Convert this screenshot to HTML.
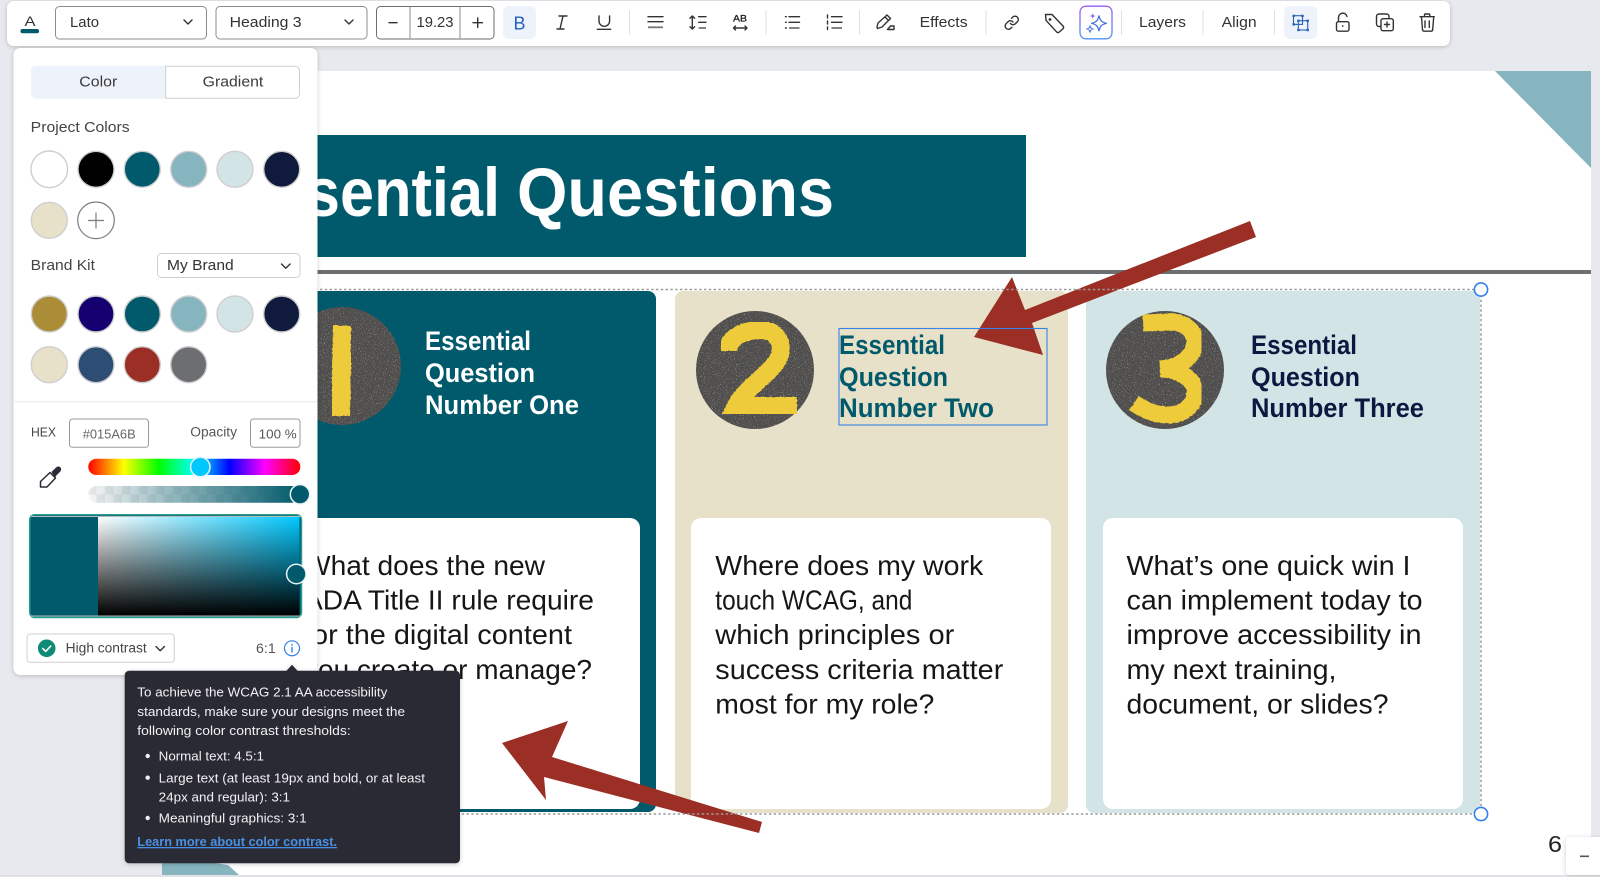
<!DOCTYPE html>
<html lang="en">
<head>
<meta charset="utf-8">
<title>Essential Questions editor</title>
<style>
html,body{margin:0;padding:0;width:1600px;height:877px;overflow:hidden;background:#e8e9ee}
svg{display:block;font-family:"Liberation Sans",sans-serif}
.ui{fill:#333}
.ic{fill:none;stroke:#333;stroke-width:1.4;stroke-linecap:round;stroke-linejoin:round}
.gl{fill:none;stroke:#777;stroke-width:1.8}
.dv{stroke:#dfe0e4;stroke-width:1}
.sw{stroke:#cfcfcf;stroke-width:1.4}
.hd{font-weight:bold;font-size:26.5px}
.bd{font-size:27.5px;fill:#161616}
.tt{font-size:13px;fill:#f1f1f3}
.dash{fill:none;stroke:#9a9a9a;stroke-width:1.5;stroke-dasharray:2.4 2.4}
</style>
</head>
<body>
<svg width="1600" height="877" viewBox="0 0 1600 877" xmlns="http://www.w3.org/2000/svg">
<defs>
<filter id="as" x="0" y="0" width="100%" height="100%" color-interpolation-filters="sRGB">
<feTurbulence type="fractalNoise" baseFrequency=".9" numOctaves="2" seed="4"/>
<feColorMatrix type="matrix" values="0 0 0 0 .62 0 0 0 0 .62 0 0 0 0 .62 5 0 0 0 -3"/>
<feComposite in2="SourceGraphic" operator="in"/>
<feBlend in2="SourceGraphic" mode="normal"/>
</filter>
<filter id="ro" x="-10%" y="-10%" width="120%" height="120%" color-interpolation-filters="sRGB">
<feTurbulence type="fractalNoise" baseFrequency=".4" numOctaves="2" seed="8" result="n"/>
<feDisplacementMap in="SourceGraphic" in2="n" scale="2" xChannelSelector="R" yChannelSelector="G"/>
</filter>
<filter id="sh" x="-10%" y="-10%" width="120%" height="120%"><feDropShadow dx="0" dy="1" stdDeviation="2.5" flood-color="#000" flood-opacity=".2"/></filter>
<linearGradient id="hue"><stop offset="0" stop-color="#f00"/><stop offset=".1667" stop-color="#ff0"/><stop offset=".3333" stop-color="#0f0"/><stop offset=".5" stop-color="#0ff"/><stop offset=".6667" stop-color="#00f"/><stop offset=".8333" stop-color="#f0f"/><stop offset="1" stop-color="#f00"/></linearGradient>
<linearGradient id="alp"><stop offset="0" stop-color="#015a6b" stop-opacity="0"/><stop offset="1" stop-color="#015a6b"/></linearGradient>
<linearGradient id="wc"><stop offset="0" stop-color="#fff"/><stop offset="1" stop-color="#00c8ff"/></linearGradient>
<linearGradient id="bk" x1="0" y1="0" x2="0" y2="1"><stop offset="0" stop-color="#000" stop-opacity="0"/><stop offset="1" stop-color="#000"/></linearGradient>
<linearGradient id="ai" x1="0" y1="0" x2="0" y2="1"><stop offset="0" stop-color="#9b5cf5"/><stop offset="1" stop-color="#4f94f5"/></linearGradient>
<pattern id="chk" x="88" y="486" width="17" height="17" patternUnits="userSpaceOnUse"><rect width="17" height="17" fill="#f6f6f6"/><rect width="8.5" height="8.5" fill="#e8e8e8"/><rect x="8.5" y="8.5" width="8.5" height="8.5" fill="#e8e8e8"/></pattern>
</defs>

<rect width="1600" height="877" fill="#e8e9ee"/>

<!-- slide -->
<rect x="162" y="71" width="1429" height="804" fill="#fff"/>
<polygon points="1495,71 1591,71 1591,168" fill="#87b5bf"/>
<polygon points="162,855 228,865 239,875 162,875" fill="#87b5bf"/>
<rect x="200" y="135" width="826" height="122" fill="#015a6b"/>
<text x="231" y="216" font-size="69" font-weight="bold" fill="#fff" textLength="269" lengthAdjust="spacingAndGlyphs">Essential</text>
<text x="517" y="216" font-size="69" font-weight="bold" fill="#fff" textLength="317" lengthAdjust="spacingAndGlyphs">Questions</text>
<rect x="200" y="270" width="1391" height="4" fill="#6d6e71"/>

<!-- cards -->
<rect x="264" y="291" width="392" height="521" rx="8" fill="#015a6b"/>
<rect x="675" y="291" width="393" height="522" rx="8" fill="#e8e1c9"/>
<rect x="1086" y="291" width="394" height="522" rx="8" fill="#d3e4e7"/>
<rect x="280" y="518" width="360" height="291" rx="10" fill="#fff"/>
<rect x="691" y="518" width="360" height="291" rx="10" fill="#fff"/>
<rect x="1103" y="518" width="360" height="291" rx="10" fill="#fff"/>

<!-- number circles -->
<circle cx="342" cy="366" r="59" fill="#4f4e4d" filter="url(#as)"/>
<polygon points="333,325 351,326 351,370 350,416 332,416 332,370" fill="#eecb3b" filter="url(#ro)"/>
<circle cx="755" cy="370" r="59" fill="#4f4e4d" filter="url(#as)"/>
<path d="M728 351C728 335 748 330 761 330C776 330 783 342 780 354C777 370 746 386 736 406L797 406" fill="none" stroke="#eecb3b" stroke-width="18" filter="url(#ro)"/>
<circle cx="1165" cy="370" r="59" fill="#4f4e4d" filter="url(#as)"/>
<path d="M1143 323L1170 322C1186 322 1195 332 1195 342C1195 356 1180 368 1160 369C1180 369 1195 380 1195 392C1195 406 1182 415 1168 415C1155 415 1144 410 1134 403" fill="none" stroke="#eecb3b" stroke-width="17" filter="url(#ro)"/>

<!-- headings -->
<g class="hd" fill="#fff">
<text x="425" y="350" textLength="106" lengthAdjust="spacingAndGlyphs">Essential</text>
<text x="425" y="382" textLength="110" lengthAdjust="spacingAndGlyphs">Question</text>
<text x="425" y="414" textLength="154" lengthAdjust="spacingAndGlyphs">Number One</text>
</g>
<g class="hd" fill="#015a6b">
<text x="839" y="354" textLength="106" lengthAdjust="spacingAndGlyphs">Essential</text>
<text x="839" y="386" textLength="109" lengthAdjust="spacingAndGlyphs">Question</text>
<text x="839" y="417" textLength="155" lengthAdjust="spacingAndGlyphs">Number Two</text>
</g>
<g class="hd" fill="#0e1740">
<text x="1251" y="354" textLength="106" lengthAdjust="spacingAndGlyphs">Essential</text>
<text x="1251" y="386" textLength="109" lengthAdjust="spacingAndGlyphs">Question</text>
<text x="1251" y="417" textLength="173" lengthAdjust="spacingAndGlyphs">Number Three</text>
</g>

<!-- body text -->
<g class="bd">
<text x="304" y="575" textLength="241" lengthAdjust="spacingAndGlyphs">What does the new</text>
<text x="304" y="609.500" textLength="290" lengthAdjust="spacingAndGlyphs">ADA Title II rule require</text>
<text x="304" y="644.200" textLength="268" lengthAdjust="spacingAndGlyphs">for the digital content</text>
<text x="304" y="679" textLength="288" lengthAdjust="spacingAndGlyphs">you create or manage?</text>
<text x="715.300" y="575" textLength="268" lengthAdjust="spacingAndGlyphs">Where does my work</text>
<text x="715.300" y="609.500" textLength="197" lengthAdjust="spacingAndGlyphs">touch WCAG, and</text>
<text x="715.300" y="644.200" textLength="239" lengthAdjust="spacingAndGlyphs">which principles or</text>
<text x="715.300" y="679" textLength="288" lengthAdjust="spacingAndGlyphs">success criteria matter</text>
<text x="715.300" y="713.500" textLength="219" lengthAdjust="spacingAndGlyphs">most for my role?</text>
<text x="1126.500" y="575" textLength="284" lengthAdjust="spacingAndGlyphs">What’s one quick win I</text>
<text x="1126.500" y="609.500" textLength="296" lengthAdjust="spacingAndGlyphs">can implement today to</text>
<text x="1126.500" y="644.200" textLength="295" lengthAdjust="spacingAndGlyphs">improve accessibility in</text>
<text x="1126.500" y="679" textLength="210" lengthAdjust="spacingAndGlyphs">my next training,</text>
<text x="1126.500" y="713.500" textLength="262" lengthAdjust="spacingAndGlyphs">document, or slides?</text>
</g>

<!-- arrows -->
<polygon points="974,337 1012,277 1025,310 1250,221 1256,237 1032,323 1043,355" fill="#9c2f25"/>
<polygon points="502,743 568,721 552,757 762,822 759,833 544,777 546,800" fill="#9c2f25"/>

<!-- selection -->
<rect x="200" y="289.500" width="1281" height="524.500" class="dash"/>
<rect x="839" y="328.500" width="208" height="96.500" fill="none" stroke="#3583e6" stroke-width="1.100"/>
<circle cx="1481" cy="289.500" r="6.600" fill="#fff" stroke="#2f80ed" stroke-width="1.600"/>
<circle cx="1481" cy="814" r="6.600" fill="#fff" stroke="#2f80ed" stroke-width="1.600"/>

<text x="1548" y="852" font-size="23" fill="#222" textLength="14" lengthAdjust="spacingAndGlyphs">6</text>
<rect x="1566" y="837" width="50" height="38" rx="4" fill="#fff" filter="url(#sh)"/>
<rect x="1580" y="855.500" width="9" height="1.600" fill="#555"/>
<rect x="0" y="875" width="1566" height="2" fill="#e0e1e6"/>

<!-- toolbar -->
<rect x="7" y="1" width="1443" height="45" rx="7" fill="#fff" filter="url(#sh)"/>
<text x="24.500" y="26" font-size="14" fill="#333" textLength="11" lengthAdjust="spacingAndGlyphs">A</text>
<rect x="20.500" y="29" width="18.500" height="4.300" rx="2" fill="#015a6b"/>

<rect x="55.500" y="6.500" width="151" height="32.500" rx="4" fill="#fff" stroke="#8d8d8d" stroke-width="1"/>
<text x="70" y="27" font-size="14.500" class="ui" textLength="29" lengthAdjust="spacingAndGlyphs">Lato</text>
<path d="M184 20l4 4 4-4" class="ic" stroke-width="1.200"/>
<rect x="216" y="6.500" width="151" height="32.500" rx="4" fill="#fff" stroke="#8d8d8d" stroke-width="1"/>
<text x="229.600" y="27" font-size="14.500" class="ui" textLength="72" lengthAdjust="spacingAndGlyphs">Heading 3</text>
<path d="M345 20l4 4 4-4" class="ic" stroke-width="1.200"/>
<rect x="376.500" y="6.500" width="117.500" height="32.500" rx="4" fill="#fff" stroke="#6e6e6e" stroke-width="1"/>
<path d="M410 6.500V39M460 6.500V39" stroke="#8d8d8d" stroke-width="1"/>
<path d="M389 22.700h8M473 22.700h9.500M477.700 18v9.500" class="ic" stroke-width="1.500"/>
<text x="416.500" y="27" font-size="14.500" class="ui" textLength="37" lengthAdjust="spacingAndGlyphs">19.23</text>

<rect x="503" y="6" width="33" height="33" rx="6" fill="#edf2fb"/>
<text x="513.500" y="29.500" font-size="18.500" fill="#1f62c0" textLength="12" lengthAdjust="spacingAndGlyphs">B</text>
<path d="M559 16h8M557 29h7M563 16l-3 13" class="ic"/>
<path d="M599 16v5a5.300 5.300 0 0 0 10.600 0v-5M597.300 29.300h13.400" class="ic"/>
<path class="dv" d="M629.500 10v25M766 10v25M859.500 10v25M986 10v25M1121.500 10v25M1203 10v25M1274.500 10v25"/>
<path d="M648 16.700h15M648 21.700h15" class="ic" stroke-linecap="butt"/><path d="M648 27.300h15" class="gl"/>
<path d="M692.300 16v13M690 18.300l2.300-2.300 2.300 2.300M690 26.700l2.300 2.300 2.300-2.300" class="ic"/>
<path d="M698.700 16.700h7.300M698.700 22.300h7.300" class="ic" stroke="#555"/><path d="M698.700 28h7.300" class="gl"/>
<text x="733" y="21.700" font-size="9.500" fill="#222" stroke="#222" stroke-width=".3" textLength="14" lengthAdjust="spacingAndGlyphs">AB</text>
<path d="M733.500 28h13.500M735.500 26l-2 2 2 2M745 26l2 2-2 2" class="ic" stroke-width="1.200"/>
<path d="M789 16.700h10.500M789 22.300h10.500" class="ic"/><path d="M789 28h10.500" class="gl"/>
<path d="M785.500 16.700h.8M785.500 22.300h.8M785.500 28h.8" class="ic"/>
<path d="M831.500 16.700h10.500M831.500 22.300h10.500" class="ic"/><path d="M831.500 28h10.500" class="gl"/>
<path d="M827.500 15v3M827.500 21v3M827.500 27v2.500" class="ic" stroke-width="1.100"/>
<path d="M877 27l1-4 9-8 3.500 3.500-8.500 8.500-4.500 1.500zM885 17l3.500 3.500" class="ic"/><path d="M887.500 29.500h6.500v-3.500h-3.500z" class="ic" stroke="#555"/>
<text x="919.600" y="27" font-size="14.500" class="ui" textLength="48" lengthAdjust="spacingAndGlyphs">Effects</text>
<g transform="translate(1003.800 14.800) scale(.66)" fill="none" stroke="#333" stroke-width="2.100" stroke-linecap="round" stroke-linejoin="round"><path d="M10 13a5 5 0 0 0 7.540.54l3-3a5 5 0 0 0-7.070-7.070l-1.720 1.710"/><path d="M14 11a5 5 0 0 0-7.540-.54l-3 3a5 5 0 0 0 7.070 7.070l1.710-1.710"/></g>
<path d="M1045.500 14.500h6.500l11 11.500c.8 .9 .8 2-.1 2.900l-3.600 3.100c-.9 .8-2 .7-2.800-.2l-10.500-11.500z" class="ic"/><circle cx="1050" cy="19.500" r="1.400" fill="#333"/>
<rect x="1080" y="6.200" width="32" height="32.600" rx="6" fill="#fff" stroke="url(#ai)" stroke-width="1.300"/>
<path d="M1099 15.500c1 5 2.800 6.800 7.800 7.800-5 1-6.800 2.800-7.800 7.800-1-5-2.800-6.800-7.800-7.800 5-1 6.800-2.800 7.800-7.800z" fill="none" stroke="#3e6fe6" stroke-width="1.200"/>
<path d="M1092.700 13c.5 2 .9 2.500 3 3-2.100 .5-2.500 1-3 3-.5-2-.9-2.500-3-3 2.100-.5 2.500-1 3-3z" fill="#9b6cf0"/>
<path d="M1090 25.500c.5 2.400 1.100 3 3.500 3.500-2.400 .5-3 1.100-3.500 3.500-.5-2.400-1.100-3-3.500-3.500 2.400-.5 3-1.100 3.500-3.500z" fill="none" stroke="#3e6fe6" stroke-width="1"/>
<text x="1139" y="27" font-size="14.500" class="ui" textLength="47" lengthAdjust="spacingAndGlyphs">Layers</text>
<text x="1221.600" y="27" font-size="14.500" class="ui" textLength="35" lengthAdjust="spacingAndGlyphs">Align</text>
<rect x="1284" y="6" width="33.300" height="33" rx="6" fill="#edf2fb"/>
<g fill="none" stroke="#2a62b8" stroke-width="1.100"><rect x="1293.500" y="15.700" width="9" height="8.700"/><rect x="1298.300" y="20.700" width="9.400" height="9.300"/></g>
<g fill="#2a62b8"><rect x="1292.500" y="14.700" width="2.400" height="2.400"/><rect x="1301.300" y="14.700" width="2.400" height="2.400"/><rect x="1292.500" y="23.200" width="2.400" height="2.400"/><rect x="1297.200" y="19.600" width="2.400" height="2.400"/><rect x="1306.500" y="19.600" width="2.400" height="2.400"/><rect x="1297.200" y="28.800" width="2.400" height="2.400"/><rect x="1306.500" y="28.800" width="2.400" height="2.400"/></g>
<rect x="1336.500" y="21.700" width="12.500" height="9.500" rx="1.800" class="ic"/>
<path d="M1338.500 21.500v-4a4.300 4.300 0 0 1 8.500-1" class="ic"/><circle cx="1342.700" cy="26" r=".9" fill="#333"/>
<rect x="1376.500" y="14" width="12.500" height="12.500" rx="2.500" class="ic"/>
<rect x="1381" y="18.700" width="12.300" height="12" rx="2" fill="#fff" stroke="#333" stroke-width="1.400"/>
<path d="M1387 22v5M1384.500 24.500h5" class="ic" stroke-width="1.200"/>
<path d="M1420 16.700h14.300M1424.500 16.500v-1.500c0-.8.5-1 1-1h3.300c.5 0 1 .2 1 1v1.500M1421.500 17l1 12.500c.1 1 .7 1.700 1.700 1.700h6.800c1 0 1.600-.7 1.700-1.700l1-12.500M1425 21v6.500M1429.300 21v6.500" class="ic" stroke="#444"/>

<!-- colour panel -->
<rect x="13.500" y="48" width="304" height="627" rx="7" fill="#fff" filter="url(#sh)"/>
<path d="M36 65.700h129.700v33H36a5 5 0 0 1-5-5v-23a5 5 0 0 1 5-5z" fill="#edf2fb"/>
<path d="M165.700 66.200h129.300a4.500 4.500 0 0 1 4.500 4.500v23a4.500 4.500 0 0 1-4.500 4.500H165.700z" fill="#fff" stroke="#cfcfcf" stroke-width="1"/>
<text x="79.300" y="86.500" font-size="15" fill="#3a3a3a" textLength="38" lengthAdjust="spacingAndGlyphs">Color</text>
<text x="202.700" y="86.500" font-size="15" fill="#3a3a3a" textLength="60.600" lengthAdjust="spacingAndGlyphs">Gradient</text>
<text x="30.700" y="132" font-size="14.500" fill="#444" textLength="99" lengthAdjust="spacingAndGlyphs">Project Colors</text>

<circle cx="49.300" cy="169.300" r="18.300" fill="#fff" class="sw"/>
<circle cx="96" cy="169.300" r="18" fill="#000" class="sw"/>
<circle cx="142.300" cy="169.300" r="18" fill="#015a6b" class="sw"/>
<circle cx="188.700" cy="169.300" r="18" fill="#87b5bf" class="sw"/>
<circle cx="235" cy="169.300" r="18" fill="#d3e4e7" class="sw"/>
<circle cx="281.700" cy="169.300" r="18" fill="#0f1a3c" class="sw"/>
<circle cx="49.300" cy="220.300" r="18" fill="#e8e1c9" class="sw"/>
<circle cx="96" cy="220.300" r="18.300" fill="#fff" stroke="#7d7d7d" stroke-width="1.200"/>
<path d="M96 212.500v16M88 220.500h16" stroke="#7d7d7d" stroke-width="1.200"/>

<text x="30.700" y="270" font-size="14.500" fill="#444" textLength="64.300" lengthAdjust="spacingAndGlyphs">Brand Kit</text>
<rect x="157.500" y="253.500" width="142.500" height="24" rx="4" fill="#fff" stroke="#cfcfcf"/>
<text x="167" y="270" font-size="14.500" fill="#333" textLength="66.700" lengthAdjust="spacingAndGlyphs">My Brand</text>
<path d="M281.500 264l4.300 4.300 4.300-4.300" class="ic" stroke-width="1.200"/>

<circle cx="49.300" cy="314" r="18" fill="#ab8d37" class="sw"/>
<circle cx="96" cy="314" r="18" fill="#15006f" class="sw"/>
<circle cx="142.300" cy="314" r="18" fill="#015a6b" class="sw"/>
<circle cx="188.700" cy="314" r="18" fill="#87b5bf" class="sw"/>
<circle cx="235" cy="314" r="18" fill="#d3e4e7" class="sw"/>
<circle cx="281.700" cy="314" r="18" fill="#0f1a3c" class="sw"/>
<circle cx="49.300" cy="364.700" r="18" fill="#e8e1c9" class="sw"/>
<circle cx="96" cy="364.700" r="18" fill="#2e4d74" class="sw"/>
<circle cx="142.300" cy="364.700" r="18" fill="#9c2f25" class="sw"/>
<circle cx="188.700" cy="364.700" r="18" fill="#6d6e71" class="sw"/>

<path d="M14 401.700h303.500" stroke="#e8e8ea" stroke-width="1"/>
<text x="31" y="436.500" font-size="13" fill="#444" textLength="25" lengthAdjust="spacingAndGlyphs">HEX</text>
<rect x="69.500" y="419" width="79" height="28.300" rx="3" fill="#fff" stroke="#9a9a9a"/>
<text x="82.700" y="438.300" font-size="13" fill="#666" textLength="53" lengthAdjust="spacingAndGlyphs">#015A6B</text>
<text x="190.300" y="436.500" font-size="13.500" fill="#555" textLength="46.700" lengthAdjust="spacingAndGlyphs">Opacity</text>
<rect x="250.500" y="419" width="49.500" height="28.300" rx="3" fill="#fff" stroke="#9a9a9a"/>
<text x="258.700" y="438.300" font-size="13" fill="#555" textLength="38" lengthAdjust="spacingAndGlyphs">100 %</text>

<path d="M51.500 472l4.500-4.500c1.500-1.400 3.500-1.300 4.500 0 1 1.200 .8 3-.4 4.200l-3.600 3.600-.8 1.500-1.500-.5z" fill="#2b2c36"/>
<path d="M50 472.500l5.500 5.500-8.500 9h-6.500v-5.500z" fill="#fff" stroke="#2b2c36" stroke-width="1.500" stroke-linejoin="round"/>

<rect x="88.300" y="458.700" width="212" height="16.300" rx="8" fill="url(#hue)"/>
<circle cx="200.300" cy="467" r="9.700" fill="#00c8ff" stroke="#e8f2f5" stroke-width="1.500"/>
<rect x="88.300" y="486" width="212" height="16.700" rx="8.300" fill="url(#chk)"/>
<rect x="88.300" y="486" width="212" height="16.700" rx="8.300" fill="url(#alp)"/>
<circle cx="300" cy="494.300" r="9.700" fill="#015a6b" stroke="#e8f2f5" stroke-width="1.500"/>

<rect x="29.700" y="514.700" width="271.800" height="102.800" rx="5" fill="#015a6b" stroke="#2a9d8f" stroke-width="1.500"/>
<rect x="98" y="517" width="201.500" height="98.500" fill="url(#wc)"/>
<rect x="98" y="517" width="201.500" height="98.500" fill="url(#bk)"/>
<path d="M31 516.500h269.500M31 616h269.500" stroke="#b5bcbd" stroke-width="1"/>
<circle cx="296.300" cy="574" r="9.700" fill="#015a6b" stroke="#e8f2f5" stroke-width="1.500"/>

<rect x="27" y="634" width="147.300" height="28.300" rx="3" fill="#fff" stroke="#cfcfcf"/>
<circle cx="46.700" cy="648.300" r="8.800" fill="#0e8a76"/>
<path d="M42.800 648.500l2.900 2.900 5-5.300" fill="none" stroke="#fff" stroke-width="1.600" stroke-linecap="round" stroke-linejoin="round"/>
<text x="65.700" y="652.700" font-size="13.500" fill="#444" textLength="81" lengthAdjust="spacingAndGlyphs">High contrast</text>
<path d="M156 646.500l4.200 4.200 4.200-4.200" class="ic" stroke-width="1.200"/>
<text x="256" y="653" font-size="14" fill="#555" textLength="19.700" lengthAdjust="spacingAndGlyphs">6:1</text>
<circle cx="292" cy="648.300" r="7.500" fill="#fff" stroke="#2f80ed" stroke-width="1.200"/>
<path d="M292 647.500v4.500M292 644.500v.6" stroke="#2f80ed" stroke-width="1.400" stroke-linecap="round"/>

<!-- tooltip -->
<path d="M130 670.700H286.500L292 664.700L297.500 670.700H455.500a4.500 4.500 0 0 1 4.500 4.500V858.800a4.500 4.500 0 0 1-4.500 4.500H129.200a4.500 4.500 0 0 1-4.500-4.500V675.200a4.500 4.500 0 0 1 4.500-4.500z" fill="#2b2c36" filter="url(#sh)"/>
<g class="tt">
<text x="137.300" y="696.700" textLength="250" lengthAdjust="spacingAndGlyphs">To achieve the WCAG 2.1 AA accessibility</text>
<text x="137.300" y="716" textLength="267.700" lengthAdjust="spacingAndGlyphs">standards, make sure your designs meet the</text>
<text x="137.300" y="735" textLength="213.400" lengthAdjust="spacingAndGlyphs">following color contrast thresholds:</text>
<text x="158.700" y="760.700" textLength="105.300" lengthAdjust="spacingAndGlyphs">Normal text: 4.5:1</text>
<text x="158.700" y="782.300" textLength="266.300" lengthAdjust="spacingAndGlyphs">Large text (at least 19px and bold, or at least</text>
<text x="158.700" y="801.700" textLength="131.300" lengthAdjust="spacingAndGlyphs">24px and regular): 3:1</text>
<text x="158.700" y="822.700" textLength="148" lengthAdjust="spacingAndGlyphs">Meaningful graphics: 3:1</text>
</g>
<circle cx="147.700" cy="756" r="2.200" fill="#f1f1f3"/>
<circle cx="147.700" cy="777.700" r="2.200" fill="#f1f1f3"/>
<circle cx="147.700" cy="818" r="2.200" fill="#f1f1f3"/>
<text x="137.300" y="846" font-size="13" font-weight="bold" fill="#4a90e2" text-decoration="underline" textLength="199.700" lengthAdjust="spacingAndGlyphs">Learn more about color contrast.</text>
</svg>
</body>
</html>
